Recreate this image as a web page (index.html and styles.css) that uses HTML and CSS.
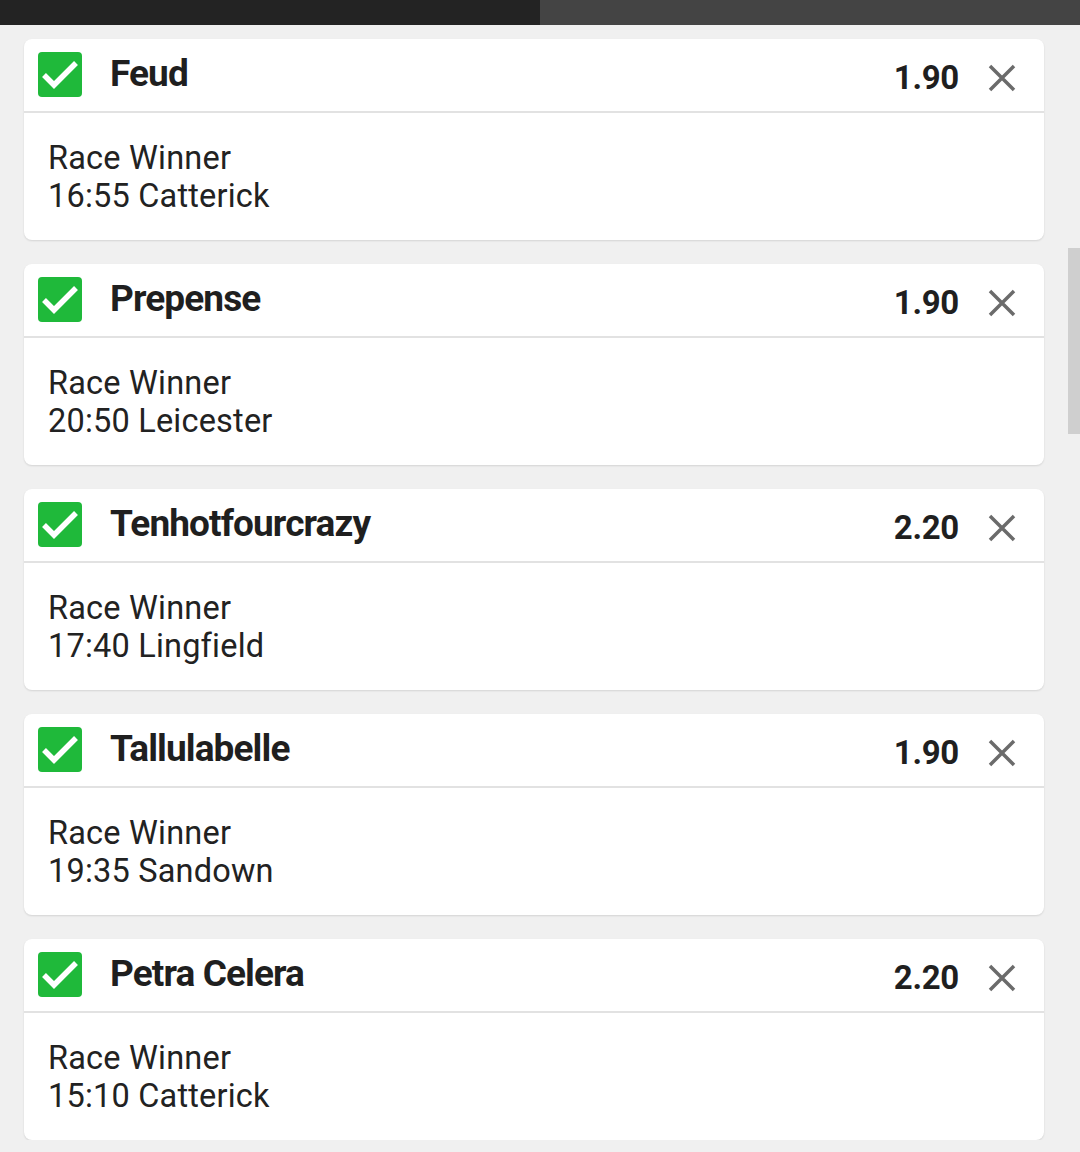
FILE: index.html
```html
<!DOCTYPE html>
<html lang="en">
<head>
    <meta charset="UTF-8">
    <meta name="viewport" content="width=device-width, initial-scale=1.0">
    <title>Bet Slip</title>
    <link rel="stylesheet" href="styles.css">
</head>
<body>
    <div class="tabs">
        <div class="tab active"></div>
        <div class="tab"></div>
    </div>
    <div class="scrollbar"></div>
    <div class="slip">
        <div class="bet">
            <div class="bet-head">
                <span class="check"><svg viewBox="0 0 44 44"><path d="M6 23 L16 33 L38 11" /></svg></span>
                <span class="runner">Feud</span>
                <span class="odds">1.90</span>
                <span class="remove"><svg viewBox="0 0 28 28"><path d="M2 2 L26 26 M26 2 L2 26" /></svg></span>
            </div>
            <div class="bet-body">
                <div>Race Winner</div>
                <div>16:55 Catterick</div>
            </div>
        </div>
        <div class="bet">
            <div class="bet-head">
                <span class="check"><svg viewBox="0 0 44 44"><path d="M6 23 L16 33 L38 11" /></svg></span>
                <span class="runner">Prepense</span>
                <span class="odds">1.90</span>
                <span class="remove"><svg viewBox="0 0 28 28"><path d="M2 2 L26 26 M26 2 L2 26" /></svg></span>
            </div>
            <div class="bet-body">
                <div>Race Winner</div>
                <div>20:50 Leicester</div>
            </div>
        </div>
        <div class="bet">
            <div class="bet-head">
                <span class="check"><svg viewBox="0 0 44 44"><path d="M6 23 L16 33 L38 11" /></svg></span>
                <span class="runner">Tenhotfourcrazy</span>
                <span class="odds">2.20</span>
                <span class="remove"><svg viewBox="0 0 28 28"><path d="M2 2 L26 26 M26 2 L2 26" /></svg></span>
            </div>
            <div class="bet-body">
                <div>Race Winner</div>
                <div>17:40 Lingfield</div>
            </div>
        </div>
        <div class="bet">
            <div class="bet-head">
                <span class="check"><svg viewBox="0 0 44 44"><path d="M6 23 L16 33 L38 11" /></svg></span>
                <span class="runner">Tallulabelle</span>
                <span class="odds">1.90</span>
                <span class="remove"><svg viewBox="0 0 28 28"><path d="M2 2 L26 26 M26 2 L2 26" /></svg></span>
            </div>
            <div class="bet-body">
                <div>Race Winner</div>
                <div>19:35 Sandown</div>
            </div>
        </div>
        <div class="bet">
            <div class="bet-head">
                <span class="check"><svg viewBox="0 0 44 44"><path d="M6 23 L16 33 L38 11" /></svg></span>
                <span class="runner">Petra Celera</span>
                <span class="odds">2.20</span>
                <span class="remove"><svg viewBox="0 0 28 28"><path d="M2 2 L26 26 M26 2 L2 26" /></svg></span>
            </div>
            <div class="bet-body">
                <div>Race Winner</div>
                <div>15:10 Catterick</div>
            </div>
        </div>
    </div>
</body>
</html>
```

FILE: styles.css
```css
body {
    margin: 0;
    background-color: #f0f0f0;
    font-family: Roboto, "Noto Sans", Arial, sans-serif;
    color: #222;
    overflow: hidden;
}
.tabs {
    display: flex;
    height: 25px;
}
.tab {
    flex: 1;
    background-color: #444;
}
.tab.active {
    background-color: #232323;
}
.scrollbar {
    position: absolute;
    right: 0;
    top: 248px;
    width: 12px;
    height: 186px;
    background-color: #cfcfcf;
}
.slip {
    display: flex;
    flex-direction: column;
    gap: 24px;
    padding: 14px 36px 0 24px;
}
.bet {
    background-color: #fff;
    border-radius: 8px;
    box-shadow: 0 1px 2px rgba(0,0,0,0.12);
}
.bet-head {
    display: flex;
    align-items: center;
    height: 72px;
    padding: 0 28px 0 14px;
    border-bottom: 2px solid #e2e2e2;
}
.check {
    width: 44px;
    height: 45px;
    border-radius: 4px;
    background-color: #1fb93a;
    margin-top: -1px;
}
.check svg {
    width: 44px;
    height: 44px;
    fill: none;
    stroke: #fff;
    stroke-width: 5.5;
}
.runner {
    flex: 1;
    margin-left: 28px;
    font-size: 37px;
    font-weight: bold;
    letter-spacing: -0.9px;
    color: #1f1f1f;
    margin-top: -3px;
}
.odds {
    font-size: 33px;
    font-weight: bold;
    letter-spacing: -0.3px;
    color: #1f1f1f;
    margin-top: 4px;
}
.remove {
    width: 28px;
    height: 28px;
    margin-left: 29px;
    margin-top: 6px;
}
.remove svg {
    width: 28px;
    height: 28px;
    stroke: #6b6b6b;
    stroke-width: 3.5;
}
.bet-body {
    padding: 26px 24px 25px;
    font-size: 32.5px;
    letter-spacing: 0.2px;
    line-height: 38px;
}
```
